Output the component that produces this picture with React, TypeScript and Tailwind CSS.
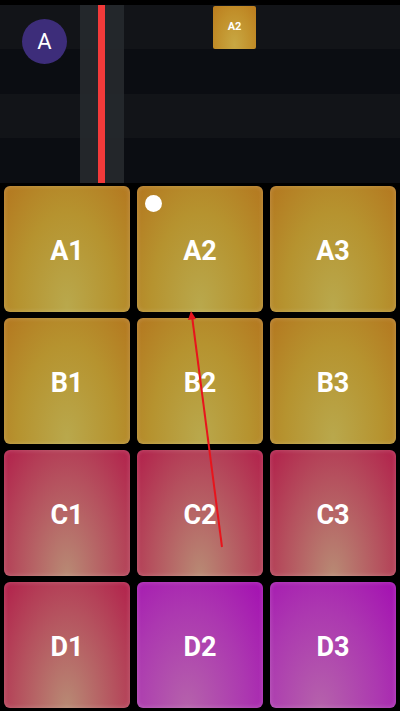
import React from 'react';

const pads = [
  { label: 'A1', tone: 'gold' },
  { label: 'A2', tone: 'gold', dot: true },
  { label: 'A3', tone: 'gold' },
  { label: 'B1', tone: 'gold' },
  { label: 'B2', tone: 'gold' },
  { label: 'B3', tone: 'gold' },
  { label: 'C1', tone: 'red' },
  { label: 'C2', tone: 'red' },
  { label: 'C3', tone: 'red' },
  { label: 'D1', tone: 'red' },
  { label: 'D2', tone: 'purple' },
  { label: 'D3', tone: 'purple' },
];

const toneClass: Record<string, string> = {
  gold: 'bg-[radial-gradient(ellipse_at_50%_95%,#b9a84c_0%,#b6932f_55%,#b4771f_100%)]',
  red: 'bg-[radial-gradient(ellipse_at_50%_100%,#b88a74_0%,#b5515e_55%,#b2204b_100%)]',
  purple: 'bg-[radial-gradient(ellipse_at_40%_100%,#b562ab_0%,#ac38b0_55%,#a40fb2_100%)]',
};

export default function App() {
  return (
    <div className="relative w-[400px] h-[711px] bg-black overflow-hidden" style={{ fontFamily: 'Roboto, "Liberation Sans", sans-serif' }}>
      {/* timeline */}
      <div className="relative h-[183px] pt-[5px]">
        <div className="flex flex-col">
          <div className="h-[44px] bg-[#121418]" />
          <div className="h-[45px] bg-[#0b0d12]" />
          <div className="h-[44px] bg-[#121418]" />
          <div className="h-[45px] bg-[#0b0d12]" />
        </div>
        {/* highlighted column */}
        <div className="absolute left-[80px] top-[5px] w-[44px] h-[178px] bg-[#26292d]/90" />
        {/* playhead */}
        <div className="absolute left-[98px] top-[5px] w-[7px] h-[178px] bg-[#f23a3a]" />
        {/* avatar */}
        <div className="absolute left-[22px] top-[19px] w-[45px] h-[45px] rounded-full bg-[#3d2d7a] flex items-center justify-center text-white text-[22px]">
          A
        </div>
        {/* clip */}
        <div className="absolute left-[213px] top-[6px] w-[43px] h-[43px] rounded-[2px] bg-[radial-gradient(ellipse_at_50%_90%,#c8a843_0%,#c18f2a_60%,#bb7c1e_100%)] flex items-center justify-center text-white text-[11px] font-bold">
          A2
        </div>
      </div>

      {/* pads */}
      <div className="grid grid-cols-3 gap-x-[7px] gap-y-[6px] px-[4px] pt-[3px]">
        {pads.map((p) => (
          <div
            key={p.label}
            className={`relative h-[126px] pt-[5px] rounded-[6px] flex items-center justify-center text-white text-[27px] font-bold shadow-[inset_0_0_5px_rgba(255,255,255,0.22)] ${toneClass[p.tone]}`}
          >
            {p.dot && <div className="absolute left-[8px] top-[9px] w-[17px] h-[17px] rounded-full bg-white" />}
            {p.label}
          </div>
        ))}
      </div>

      {/* gesture trail */}
      <svg className="absolute left-0 top-0 pointer-events-none" width="400" height="711">
        <line x1="222" y1="547" x2="192" y2="316" stroke="#e8141c" strokeWidth="2" />
        <polygon points="191,311 188,320 196,319" fill="#e8141c" />
      </svg>
    </div>
  );
}
